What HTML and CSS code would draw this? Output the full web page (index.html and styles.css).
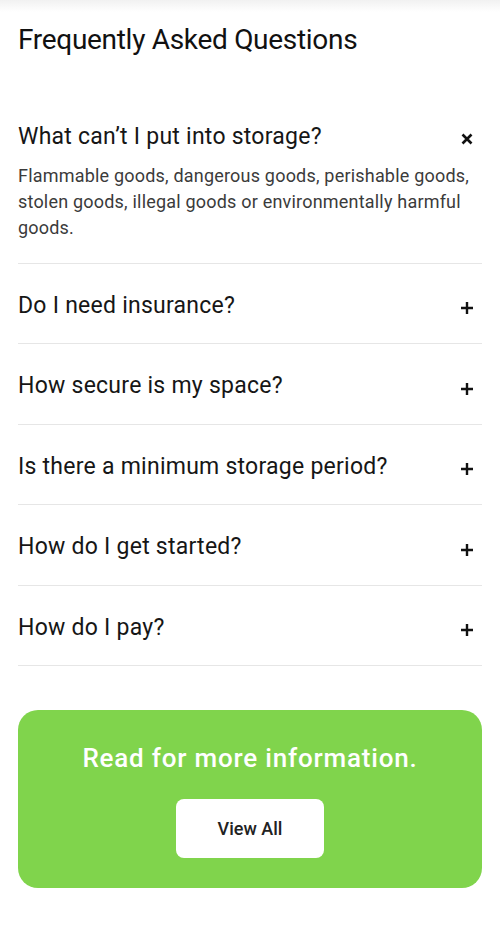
FILE: index.html
```html
<!DOCTYPE html>
<html lang="en">
<head>
<meta charset="utf-8">
<title>FAQ</title>
<link rel="stylesheet" href="styles.css">
</head>
<body>
<div class="topshade"></div>
<main class="faq">
  <h2 class="faq-title">Frequently Asked Questions</h2>
  <ul class="faq-list">
    <li class="faq-item open">
      <div class="faq-q">
        <span class="faq-q-text">What can’t I put into storage?</span>
        <svg class="faq-icon" viewBox="0 0 16 16" width="16" height="16"><path d="M3.5 3.5 L12.5 12.5 M12.5 3.5 L3.5 12.5" stroke="#111" stroke-width="2.6" stroke-linecap="butt"/></svg>
      </div>
      <p class="faq-a">Flammable goods, dangerous goods, perishable goods, stolen goods, illegal goods or environmentally harmful goods.</p>
    </li>
    <li class="faq-item">
      <div class="faq-q">
        <span class="faq-q-text">Do I need insurance?</span>
        <svg class="faq-icon" viewBox="0 0 16 16" width="16" height="16"><path d="M8 2 V14 M2 8 H14" stroke="#111" stroke-width="2.4"/></svg>
      </div>
    </li>
    <li class="faq-item">
      <div class="faq-q">
        <span class="faq-q-text">How secure is my space?</span>
        <svg class="faq-icon" viewBox="0 0 16 16" width="16" height="16"><path d="M8 2 V14 M2 8 H14" stroke="#111" stroke-width="2.4"/></svg>
      </div>
    </li>
    <li class="faq-item">
      <div class="faq-q">
        <span class="faq-q-text">Is there a minimum storage period?</span>
        <svg class="faq-icon" viewBox="0 0 16 16" width="16" height="16"><path d="M8 2 V14 M2 8 H14" stroke="#111" stroke-width="2.4"/></svg>
      </div>
    </li>
    <li class="faq-item">
      <div class="faq-q">
        <span class="faq-q-text">How do I get started?</span>
        <svg class="faq-icon" viewBox="0 0 16 16" width="16" height="16"><path d="M8 2 V14 M2 8 H14" stroke="#111" stroke-width="2.4"/></svg>
      </div>
    </li>
    <li class="faq-item">
      <div class="faq-q">
        <span class="faq-q-text">How do I pay?</span>
        <svg class="faq-icon" viewBox="0 0 16 16" width="16" height="16"><path d="M8 2 V14 M2 8 H14" stroke="#111" stroke-width="2.4"/></svg>
      </div>
    </li>
  </ul>
  <section class="cta">
    <h3 class="cta-title">Read for more information.</h3>
    <a class="cta-btn" href="#">View All</a>
  </section>
</main>
</body>
</html>
```
FILE: styles.css
```css
* { box-sizing: border-box; }
html, body { margin: 0; padding: 0; background: #fff; }
body {
  font-family: Roboto, "Liberation Sans", Arial, sans-serif;
  color: #151515;
}
.topshade {
  height: 12px;
  background: linear-gradient(to bottom, #f1f1f1, #ffffff);
}
.faq {
  padding: 0 18px;
}
.faq-title {
  margin: 11px 0 0;
  font-size: 28px;
  line-height: 34px;
  font-weight: 400;
  letter-spacing: -0.3px;
  color: #111;
}
.faq-list {
  list-style: none;
  margin: 37.5px 0 0;
  padding: 0;
}
.faq-item {
  border-bottom: 1px solid #e6e6e6;
}
.faq-q {
  display: flex;
  align-items: center;
  justify-content: space-between;
  padding: 30px 0 25.5px;
}
.faq-q-text {
  font-size: 23px;
  line-height: 24px;
  font-weight: 400;
  letter-spacing: 0.25px;
  color: #161616;
}
.faq-icon {
  flex: none;
  margin-right: 7px;
  position: relative;
  top: 2.5px;
}
.faq-item.open .faq-q {
  padding-bottom: 0;
}
.faq-a {
  margin: 14.7px 0 0;
  padding-bottom: 21.8px;
  font-size: 18px;
  line-height: 26px;
  letter-spacing: 0.2px;
  color: #3b3b3b;
}
.cta {
  margin-top: 43.5px;
  background: #80d44c;
  border-radius: 20px;
  padding: 32px 0 30.5px;
  display: flex;
  flex-direction: column;
  align-items: center;
}
.cta-title {
  margin: 0;
  font-size: 26px;
  line-height: 32px;
  font-weight: 500;
  letter-spacing: 0.8px;
  color: #fff;
}
.cta-btn {
  margin-top: 25px;
  width: 148px;
  height: 59px;
  border-radius: 8px;
  background: #fff;
  color: #222;
  text-decoration: none;
  font-size: 18px;
  font-weight: 500;
  display: flex;
  align-items: center;
  justify-content: center;
}
```
